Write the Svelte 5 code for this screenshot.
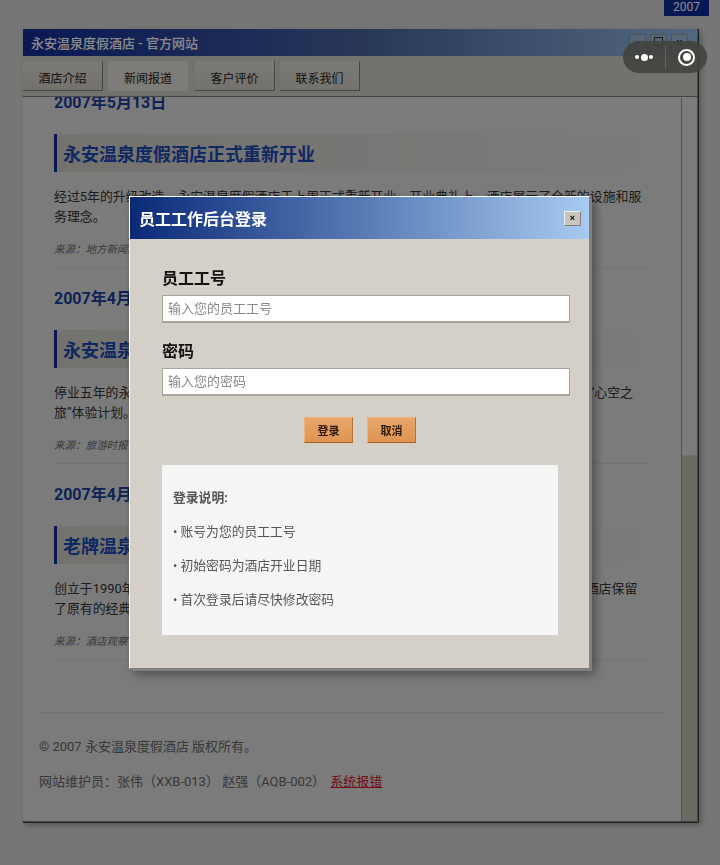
<script>
  const articles = [
    { date: '2007年5月13日', title: '永安温泉度假酒店正式重新开业', text: '经过5年的升级改造，永安温泉度假酒店于上周正式重新开业。开业典礼上，酒店展示了全新的设施和服务理念。', src: '来源：地方新闻网' },
    { date: '2007年4月28日', title: '永安温泉度假酒店推出全新体验计划', text: '停业五年的永安温泉度假酒店即将在5月重新开放，并推出了一系列全新的特色服务，其中包括“心空之旅”体验计划。', src: '来源：旅游时报' },
    { date: '2007年4月10日', title: '老牌温泉度假酒店即将重新开放', text: '创立于1990年代的永安温泉度假酒店是本地最具历史的度假胜地，经过多年翻修与升级之后，酒店保留了原有的经典风格。', src: '来源：酒店观察' }
  ];
</script>

<div class="tag">2007</div>
<div class="window">
  <div class="titlebar">
    <span>永安温泉度假酒店 - 官方网站</span>
    <div class="winbtns"><i>-</i><i class="sq"></i><i>×</i></div>
  </div>
  <nav>
    <a href="#a">酒店介绍</a>
    <a href="#a" class="on">新闻报道</a>
    <a href="#a">客户评价</a>
    <a href="#a">联系我们</a>
  </nav>
  <div class="view">
    <div class="content">
      <div class="inner">
        {#each articles as a}
          <article>
            <h3>{a.date}</h3>
            <h2>{a.title}</h2>
            <p>{a.text}</p>
            <small>{a.src}</small>
          </article>
        {/each}
        <footer>
          <p>© 2007 永安温泉度假酒店 版权所有。</p>
          <p>网站维护员：张伟（XXB-013） 赵强（AQB-002） <a href="#a">系统报错</a></p>
        </footer>
      </div>
    </div>
    <div class="scroll"><div class="thumb"></div></div>
  </div>
</div>

<div class="overlay">
  <div class="modal">
    <header>
      <span>员工工作后台登录</span>
      <button class="close">×</button>
    </header>
    <div class="body">
      <label for="u">员工工号</label>
      <input id="u" placeholder="输入您的员工工号" />
      <label for="p">密码</label>
      <input id="p" placeholder="输入您的密码" />
      <div class="actions">
        <button>登录</button>
        <button>取消</button>
      </div>
      <div class="info">
        <strong>登录说明:</strong>
        <div>• 账号为您的员工工号</div>
        <div>• 初始密码为酒店开业日期</div>
        <div>• 首次登录后请尽快修改密码</div>
      </div>
    </div>
  </div>
</div>

<div class="capsule">
  <div class="dots"><b></b><b class="big"></b><b></b></div>
  <span class="sep"></span>
  <div class="target"><b></b></div>
</div>

<style>
  :global(body) {
    margin: 0;
    height: 865px;
    overflow: hidden;
    background: #d8d8d8;
    font-family: Roboto, "Noto Sans CJK SC", sans-serif;
  }
  .tag {
    position: absolute;
    top: 0;
    left: 664px;
    width: 45px;
    height: 16px;
    background: #0a2c9a;
    color: #fff;
    font-size: 12px;
    line-height: 14px;
    text-align: center;
  }
  .window {
    position: absolute;
    left: 22px;
    top: 28px;
    width: 674px;
    height: 792px;
    border: 1px solid #d4d0c8;
    border-right-color: #808080;
    border-bottom-color: #808080;
    box-shadow: 1px 1px 0 #404040, 3px 3px 6px rgba(0, 0, 0, .3);
    background: #e0e0e0;
    display: flex;
    flex-direction: column;
  }
  .titlebar {
    height: 27px;
    flex: none;
    background: linear-gradient(90deg, #122d9a, #49649f 50%, #96bee8);
    color: #fff;
    font-size: 13px;
    font-weight: 500;
    padding: 0 9px 0 8px;
    display: flex;
    align-items: center;
    justify-content: space-between;
  }
  .winbtns { display: flex; gap: 4px; align-self: flex-start; padding-top: 5px; }
  .winbtns i {
    width: 17px;
    height: 16px;
    box-sizing: border-box;
    background: rgba(212, 208, 200, .25);
    border: 1px solid rgba(128, 128, 128, .6);
    color: #000;
    font-size: 10px;
    font-style: normal;
    line-height: 15px;
    text-align: center;
    position: relative;
  }
  .winbtns i.sq::after {
    content: "";
    position: absolute;
    left: 3px;
    top: 2px;
    width: 7px;
    height: 7px;
    border: 1px solid #333;
  }
  nav {
    height: 41px;
    flex: none;
    box-sizing: border-box;
    background: #d4d0c8;
    border-bottom: 1px solid #808080;
    display: flex;
    align-items: center;
    gap: 5px;
    padding: 0 0 1px 0;
  }
  nav a {
    width: 80px;
    height: 30px;
    box-sizing: border-box;
    background: linear-gradient(#e2dfd8, #d4d0c8);
    border-right: 1px solid #808080;
    border-bottom: 1px solid #808080;
    color: #222;
    font-size: 12px;
    padding-top: 9px;
    line-height: 18px;
    text-align: center;
    text-decoration: none;
  }
  nav a.on { background: #e4e2dc; border: 0; margin-right: 2px; }
  .view { flex: 1; display: flex; min-height: 0; }
  .content { flex: 1; overflow: hidden; }
  .inner { margin-top: -25px; padding: 0 16px; }
  article {
    margin: 0 16px 0 15px;
    padding: 18px 0 9px;
    border-bottom: 1px solid #d4d4d4;
  }
  h3 {
    margin: 0 0 19px;
    height: 25px;
    font-size: 16px;
    line-height: 25px;
    font-weight: 700;
    color: #1a3f9e;
  }
  h2 {
    margin: 0 0 15px;
    padding: 2px 0 0 6px;
    height: 38px;
    box-sizing: border-box;
    border-left: 3px solid #122d9a;
    background: linear-gradient(90deg, #d4d0c8, #e0e0e0);
    font-size: 18px;
    line-height: 38px;
    font-weight: 700;
    color: #1b49b4;
  }
  article p {
    margin: 0 0 15px;
    font-size: 12.9px;
    line-height: 20px;
    color: #333;
  }
  small {
    display: block;
    font-size: 10.5px;
    line-height: 16px;
    font-style: italic;
    color: #666;
  }
  footer {
    margin-top: 52px;
    border-top: 1px solid #d4d4d4;
    padding-top: 25px;
    font-size: 13px;
    color: #666;
  }
  footer p { margin: 0 0 17px; line-height: 18px; }
  footer a { color: #d0182c; margin-left: 2px; }
  .scroll {
    width: 16px;
    background: #c2bfb4;
    border-left: 1px solid #999;
    box-sizing: border-box;
    flex: none;
  }
  .thumb { height: 358px; background: #e0e0e0; border-bottom: 1px solid #ccc; }

  .overlay {
    position: fixed;
    inset: 0;
    background: rgba(0, 0, 0, .45);
  }
  .modal {
    position: absolute;
    left: 129px;
    top: 196px;
    width: 459px;
    height: 471px;
    border: 1px solid;
    border-color: #fff #808080 #808080 #fff;
    box-shadow: 2px 2px 0 #808080, 5px 5px 10px rgba(0, 0, 0, .4);
    background: #d4d0c8;
  }
  header {
    height: 42px;
    background: linear-gradient(90deg, #0a2a78, #a6caf0);
    color: #fff;
    font-size: 16px;
    font-weight: 700;
    display: flex;
    align-items: center;
    justify-content: space-between;
    padding: 0 8px 0 9px;
  }
  .close {
    width: 17px;
    height: 15px;
    padding: 0;
    background: #c8c4bc;
    border: 1px solid;
    border-color: #eee #808080 #808080 #eee;
    font-size: 9px;
    line-height: 12px;
    color: #000;
    font-weight: 700;
  }
  .body { padding: 27px 21px 0 32px; }
  label {
    display: block;
    font-size: 16px;
    font-weight: 700;
    line-height: 26px;
    color: #111;
    margin-bottom: 3px;
  }
  input {
    display: block;
    box-sizing: border-box;
    width: 408px;
    height: 28px;
    margin-bottom: 16px;
    padding: 0 5px;
    border: 1px solid #a8a49c;
    border-bottom-width: 2px;
    background: #fff;
    font: 13px Roboto, "Noto Sans CJK SC", sans-serif;
  }
  input::placeholder { color: #888; opacity: 1; }
  .actions {
    width: 396px;
    display: flex;
    justify-content: center;
    gap: 14px;
    margin: 21px 0 22px;
  }
  .actions button {
    width: 49px;
    height: 26px;
    padding: 0;
    background: linear-gradient(#e9a76a, #dd9453);
    border: 1px solid;
    border-color: #eeb27c #b87333 #a86428 #eeb27c;
    font: 700 11px Roboto, "Noto Sans CJK SC", sans-serif;
    color: #2a1608;
  }
  .info {
    box-sizing: border-box;
    width: 396px;
    height: 170px;
    background: #f5f5f5;
    padding: 16px 11px;
    font-size: 12.8px;
    color: #555;
  }
  .info strong { display: block; line-height: 34px; font-weight: 700; }
  .info div { line-height: 34px; }
  .capsule {
    position: absolute;
    left: 623px;
    top: 41px;
    width: 84px;
    height: 32px;
    border-radius: 16px;
    background: rgba(66, 66, 62, .9);
    display: flex;
    align-items: center;
  }
  .dots { width: 42px; display: flex; justify-content: center; align-items: center; gap: 1.5px; }
  .dots b { width: 4px; height: 4px; border-radius: 50%; background: #fff; }
  .dots b.big { width: 7px; height: 7px; }
  .sep { width: 1px; height: 24px; background: rgba(255, 255, 255, .15); }
  .target {
    margin-left: 12px;
    width: 13px;
    height: 13px;
    border: 2px solid #fff;
    border-radius: 50%;
    display: flex;
    align-items: center;
    justify-content: center;
  }
  .target b { width: 8px; height: 8px; background: #fff; border-radius: 50%; }
</style>
